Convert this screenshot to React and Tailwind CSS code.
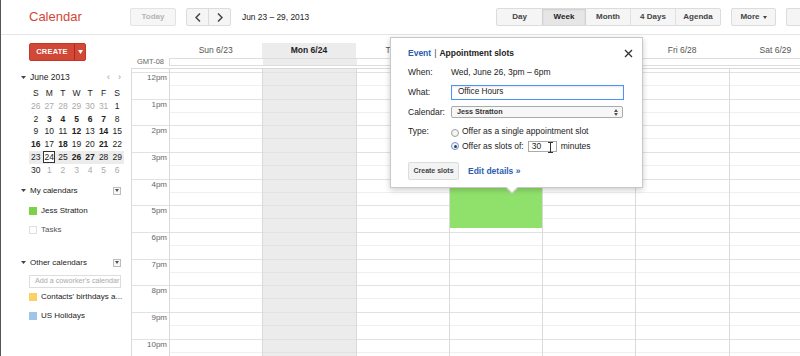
import React from "react";

const days = [
  { label: "Sun 6/23" },
  { label: "Mon 6/24", today: true },
  { label: "Tue 6/25" },
  { label: "Wed 6/26", hidden: true },
  { label: "Thu 6/27", hidden: true },
  { label: "Fri 6/28" },
  { label: "Sat 6/29" },
];

const hours = ["12pm", "1pm", "2pm", "3pm", "4pm", "5pm", "6pm", "7pm", "8pm", "9pm", "10pm"];

const miniRows = [
  [26, 27, 28, 29, 30, 31, 1],
  [2, 3, 4, 5, 6, 7, 8],
  [9, 10, 11, 12, 13, 14, 15],
  [16, 17, 18, 19, 20, 21, 22],
  [23, 24, 25, 26, 27, 28, 29],
  [30, 1, 2, 3, 4, 5, 6],
];
const boldSet = new Set([3, 4, 5, 6, 7, 12, 14, 16, 18, 21, 26, 27]);

function Tri() {
  return (
    <svg width="5" height="3" viewBox="0 0 5 3" className="shrink-0">
      <path d="M0 0h5L2.5 3z" fill="#444" />
    </svg>
  );
}

function DropBox() {
  return (
    <div className="w-[8px] h-[8px] border border-[#bbb] bg-[#f6f6f6] flex items-center justify-center">
      <svg width="4" height="3" viewBox="0 0 4 3">
        <path d="M0 0h4L2 3z" fill="#555" />
      </svg>
    </div>
  );
}

function Chevron({ dir }) {
  return (
    <svg width="6" height="9" viewBox="0 0 6 9">
      <path
        d={dir === "left" ? "M5 .5L1 4.5l4 4" : "M1 .5l4 4-4 4"}
        stroke="#444"
        strokeWidth="1.5"
        fill="none"
      />
    </svg>
  );
}

function HeaderBtn({ children, className = "" }) {
  return (
    <div
      className={`h-[18px] flex items-center justify-center text-[8px] font-bold text-[#444] ${className}`}
    >
      {children}
    </div>
  );
}

export default function App() {
  return (
    <div className="relative w-[800px] h-[356px] overflow-hidden bg-white border-l border-[#555] font-['Liberation_Sans',Arial,sans-serif] text-[#222]">
      {/* Header */}
      <div className="flex items-center h-[35px] border-b border-[#e5e5e5]">
        <div className="w-[129px] shrink-0 pl-[28px] text-[13px] text-[#d14836] leading-none pb-[2px]">
          Calendar
        </div>
        <HeaderBtn className="w-[46px] border border-[#e3e3e3] bg-[#f6f6f6] rounded-[2px] !text-[#b5b5b5]">
          Today
        </HeaderBtn>
        <div className="ml-[10px] flex h-[18px] border border-[#dcdcdc] rounded-[2px] bg-[#f5f5f5]">
          <div className="w-[22px] flex items-center justify-center border-r border-[#dcdcdc]">
            <Chevron dir="left" />
          </div>
          <div className="w-[21px] flex items-center justify-center">
            <Chevron dir="right" />
          </div>
        </div>
        <div className="ml-[11px] text-[8.4px] text-[#222]">Jun 23 – 29, 2013</div>
        <div className="flex-1" />
        <div className="flex h-[18px] border border-[#dcdcdc] rounded-[2px] bg-[#f5f5f5]">
          <HeaderBtn className="w-[45px] !h-[16px]">Day</HeaderBtn>
          <HeaderBtn className="w-[44px] !h-[16px] bg-[#e6e6e6] border-x border-[#d0d0d0] shadow-[inset_0_1px_2px_rgba(0,0,0,0.1)] !text-[#222]">
            Week
          </HeaderBtn>
          <HeaderBtn className="w-[44px] !h-[16px]">Month</HeaderBtn>
          <HeaderBtn className="w-[45px] !h-[16px] border-l border-[#e0e0e0]">4 Days</HeaderBtn>
          <HeaderBtn className="w-[45px] !h-[16px] border-l border-[#e0e0e0]">Agenda</HeaderBtn>
        </div>
        <HeaderBtn className="ml-[10px] w-[45px] border border-[#dcdcdc] rounded-[2px] bg-[#f5f5f5] gap-[3px]">
          More
          <svg width="4" height="3" viewBox="0 0 4 3">
            <path d="M0 0h4L2 3z" fill="#444" />
          </svg>
        </HeaderBtn>
        <div className="ml-[10px] w-[14px] h-[18px] shrink-0 border-l border-y border-[#dcdcdc] bg-[#f5f5f5] rounded-l-[2px]" />
      </div>

      <div className="flex">
        {/* Sidebar */}
        <div className="w-[129px] shrink-0 flex flex-col text-[8px]">
          <div className="mt-[8px] ml-[28px] flex h-[18px] w-[57px] rounded-[2px] bg-[#d14836] border border-[#c53727] text-white">
            <div className="w-[44px] flex items-center justify-center text-[7.5px] font-bold tracking-[0.2px]">
              CREATE
            </div>
            <div className="flex-1 flex items-center justify-center border-l border-[#b0281a]">
              <svg width="5" height="4" viewBox="0 0 5 4">
                <path d="M0 0h5L2.5 4z" fill="#fff" />
              </svg>
            </div>
          </div>

          <div className="mt-[10px] h-[12px] pl-[20px] pr-[9px] flex items-center">
            <Tri />
            <span className="ml-[4px] text-[8.5px]">June 2013</span>
            <div className="flex-1" />
            <span className="text-[#999] text-[9px] leading-none">‹</span>
            <span className="ml-[8px] text-[#999] text-[9px] leading-none">›</span>
          </div>

          <div className="mt-[4px] ml-[28px] w-[95px] text-[8.5px]">
            <div className="grid grid-cols-7 h-[12.8px] items-center text-center">
              {["S", "M", "T", "W", "T", "F", "S"].map((d, i) => (
                <div key={i}>{d}</div>
              ))}
            </div>
            {miniRows.map((row, ri) => (
              <div
                key={ri}
                className={`grid grid-cols-7 h-[12.8px] items-center text-center ${
                  ri === 4 ? "bg-[#ececec]" : ""
                }`}
              >
                {row.map((n, ci) => {
                  const other = (ri === 0 && ci < 6) || (ri === 5 && ci > 0);
                  const isToday = ri === 4 && n === 24;
                  return (
                    <div key={ci} className="flex items-center justify-center h-full">
                      <span
                        className={`${other ? "text-[#aaa]" : "text-[#222]"} ${
                          !other && boldSet.has(n) ? "font-bold" : ""
                        } ${
                          isToday
                            ? "border border-[#333] w-[12px] h-[12px] flex items-center justify-center bg-white"
                            : ""
                        }`}
                      >
                        {n}
                      </span>
                    </div>
                  );
                })}
              </div>
            ))}
          </div>

          <div className="mt-[8px] h-[12px] pl-[20px] pr-[9px] flex items-center">
            <Tri />
            <span className="ml-[4px]">My calendars</span>
            <div className="flex-1" />
            <DropBox />
          </div>
          <div className="mt-[5px] h-[19px] pl-[28px] flex items-center">
            <div className="w-[8px] h-[8px] bg-[#7bd148]" />
            <span className="ml-[4px]">Jess Stratton</span>
          </div>
          <div className="h-[19px] pl-[28px] flex items-center">
            <div className="w-[8px] h-[8px] border border-[#e0e0e0] bg-white" />
            <span className="ml-[4px] text-[#555]">Tasks</span>
          </div>

          <div className="mt-[17px] h-[12px] pl-[20px] pr-[9px] flex items-center">
            <Tri />
            <span className="ml-[4px]">Other calendars</span>
            <div className="flex-1" />
            <DropBox />
          </div>
          <div className="mt-[6px] ml-[28px] w-[92px] h-[13px] border border-[#ddd] flex items-center pl-[5px] overflow-hidden whitespace-nowrap text-[7.2px] text-[#aaa]">
            Add a coworker's calendar
          </div>
          <div className="h-[19px] pl-[28px] flex items-center whitespace-nowrap">
            <div className="w-[8px] h-[8px] bg-[#fad165]" />
            <span className="ml-[4px]">Contacts' birthdays a...</span>
          </div>
          <div className="h-[19px] pl-[28px] flex items-center">
            <div className="w-[8px] h-[8px] bg-[#9fc6e7]" />
            <span className="ml-[4px]">US Holidays</span>
          </div>
        </div>

        {/* Main grid */}
        <div className="flex flex-col shrink-0">
          <div className="flex h-[23px]">
            <div className="w-[39px] shrink-0" />
            {days.map((d, i) => (
              <div key={i} className="w-[93.3px] shrink-0 pt-[8px]">
                <div
                  className={`h-[15px] flex items-center justify-center text-[8.5px] ${
                    d.today ? "bg-[#ececec] font-bold text-[#222]" : "text-[#555]"
                  }`}
                >
                  {d.hidden ? "" : d.label}
                </div>
              </div>
            ))}
          </div>
          <div className="flex h-[10px]">
            <div className="w-[39px] shrink-0 pr-[5px] text-right text-[7.5px] text-[#666] leading-[8px]">
              GMT-08
            </div>
            <div className="flex h-[8px] border border-[#ddd]">
              {days.map((d, i) => (
                <div
                  key={i}
                  className={`w-[93.3px] shrink-0 ${d.today ? "bg-[#ececec]" : ""}`}
                />
              ))}
            </div>
          </div>
          <div className="flex ml-[1px] border-t border-[#dadada]">
            <div className="w-[38px] shrink-0 border-l border-[#dadada] pt-[3px]">
              {hours.map((h) => (
                <div
                  key={h}
                  className="h-[26.667px] border-t border-[#e2e2e2] text-right pr-[2px] pt-[1px] text-[8px] leading-[8px] text-[#666]"
                >
                  {h}
                </div>
              ))}
            </div>
            {days.map((d, i) => (
              <div
                key={i}
                className={`w-[93.3px] shrink-0 border-l border-[#dadada] pt-[3px] ${
                  d.today ? "bg-[#ececec]" : ""
                }`}
              >
                <div className="relative">
                  {hours.map((h) => (
                    <div key={h} className="h-[26.667px] border-t border-[#e2e2e2]">
                      <div
                        className={`h-[13px] border-b ${
                          d.today ? "border-[#e2e2e2]" : "border-[#f0f0f0]"
                        }`}
                      />
                    </div>
                  ))}
                  {i === 3 && (
                    <div className="absolute left-0 right-0 top-[80px] h-[76px] bg-[#90e16b]" />
                  )}
                </div>
              </div>
            ))}
          </div>
        </div>
      </div>

      {/* Popup */}
      <div className="absolute left-[389px] top-[37px] w-[253px] h-[151px] z-10 bg-white border border-[#c8c8c8] shadow-[0_2px_6px_rgba(0,0,0,0.2)] pl-[17px] pr-[9px] pt-[10px] text-[8.5px] text-[#222]">
        <div className="flex items-center h-[11px]">
          <span className="text-[#2a5db0] font-bold">Event</span>
          <span className="mx-[3px] text-[#444]">|</span>
          <span className="font-bold">Appointment slots</span>
          <div className="flex-1" />
          <svg width="9" height="9" viewBox="0 0 9 9">
            <path d="M1 1l7 7M8 1L1 8" stroke="#333" strokeWidth="1.3" />
          </svg>
        </div>
        <div className="flex items-center h-[12px] mt-[7px]">
          <div className="w-[43px]">When:</div>
          <div>Wed, June 26, 3pm – 6pm</div>
        </div>
        <div className="flex items-center h-[15px] mt-[7px]">
          <div className="w-[43px] self-start pt-[1px]">What:</div>
          <div className="w-[173px] h-[15px] border border-[#4d90fe] shadow-[inset_0_1px_2px_rgba(0,0,0,0.1)] flex items-center pl-[6px] text-[8.2px]">
            Office Hours
          </div>
        </div>
        <div className="flex items-center h-[12px] mt-[6px]">
          <div className="w-[43px]">Calendar:</div>
          <div className="w-[172px] h-[12px] border border-[#aaa] rounded-[2px] bg-[#f7f7f7] flex items-center pl-[5px] pr-[4px] text-[7.2px] font-bold text-[#333]">
            Jess Stratton
            <div className="flex-1" />
            <svg width="4" height="7" viewBox="0 0 4 7">
              <path d="M0 3h4L2 0zM0 4h4L2 7z" fill="#555" />
            </svg>
          </div>
        </div>
        <div className="flex items-center h-[11px] mt-[8px]">
          <div className="w-[43px]">Type:</div>
          <div className="w-[8px] h-[8px] rounded-full border border-[#a0a0a0] bg-[#f4f4f4] mt-[3px]" />
          <span className="ml-[3px]">Offer as a single appointment slot</span>
        </div>
        <div className="flex items-center h-[12px] mt-[3px]">
          <div className="w-[43px]" />
          <div className="w-[8px] h-[8px] rounded-full border border-[#6d8fcc] bg-[#f4f4f4] flex items-center justify-center">
            <div className="w-[3px] h-[3px] rounded-full bg-[#2a3f6a]" />
          </div>
          <span className="ml-[3px]">Offer as slots of:</span>
          <div className="ml-[4px] w-[29px] h-[11px] border border-[#aaa] flex items-center pl-[3px] relative">
            30
            <svg
              width="5"
              height="11"
              viewBox="0 0 5 11"
              className="absolute right-[3px] top-[0px]"
            >
              <path d="M0 .5h5M2.5 .5v10M0 10.5h5" stroke="#333" strokeWidth="1" />
            </svg>
          </div>
          <span className="ml-[4px]">minutes</span>
        </div>
        <div className="flex items-center mt-[10px] h-[18px]">
          <div className="w-[51px] h-[18px] border border-[#dcdcdc] rounded-[2px] bg-[#f3f3f3] flex items-center justify-center text-[7px] font-bold text-[#444]">
            Create slots
          </div>
          <span className="ml-[9px] text-[#2a5db0] font-bold">Edit details »</span>
        </div>
        {/* pointer */}
        <div className="absolute left-[117px] bottom-[-5px] w-[8px] h-[8px] rotate-45 bg-white border-r border-b border-[#c8c8c8]" />
      </div>
    </div>
  );
}
